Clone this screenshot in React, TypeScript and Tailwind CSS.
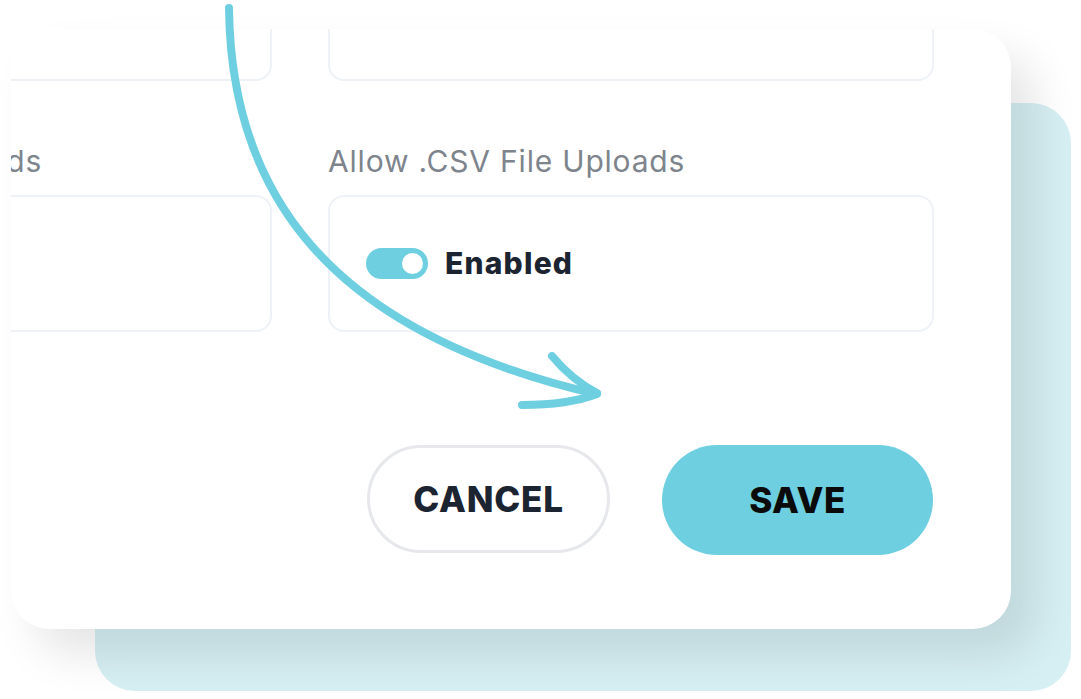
const Field = ({ label, children }: { label?: string; children?: React.ReactNode }) => {
  return (
    <div className="flex flex-col">
      {label && (
        <div className="mt-[62px] mb-[16px] h-[36px] whitespace-nowrap text-[30px] leading-[36px] tracking-[0.8px] text-[#7d848c]">
          {label}
        </div>
      )}
      <div className="h-[137px] rounded-[16px] border-2 border-[#eef2f6] flex items-center px-[36px]">
        {children}
      </div>
    </div>
  );
};

const Toggle = () => (
  <div className="flex items-center w-[62px] h-[31px] rounded-full bg-[#6dcfe0] justify-end pr-[5px]">
    <div className="w-[21px] h-[21px] rounded-full bg-white" />
  </div>
);

export default function App() {
  return (
    <div className="relative w-[1081px] h-[699px] bg-white overflow-hidden font-['Inter',sans-serif]">
      {/* teal panel behind the card */}
      <div className="absolute left-[95px] top-[103px] w-[976px] h-[588px] rounded-[40px] bg-[#d6eff3]" />

      {/* card */}
      <div className="relative ml-[11px] mt-[29px] w-[1000px] h-[600px] rounded-[38px] bg-white overflow-hidden shadow-[24px_26px_44px_rgba(0,0,0,0.1)]">
        <div className="-ml-[324px] -mt-[85px] grid grid-cols-[585px_606px] gap-x-[56px]">
          <Field />
          <Field />
          <Field label="Allow .PDF File Uploads" />
          <Field label="Allow .CSV File Uploads">
            <div className="flex items-center gap-[17px]">
              <Toggle />
              <span className="text-[30px] font-extrabold tracking-[1.2px] text-[#1b2430]">Enabled</span>
            </div>
          </Field>
          <div />
          <div className="flex justify-end gap-[52px] mt-[113px] pr-[1px]">
            <button className="w-[243px] h-[108px] rounded-full border-[3px] border-[#e6e8eb] bg-white text-[35px] font-extrabold text-[#1b2430] tracking-[0.8px]">
              CANCEL
            </button>
            <button className="w-[271px] h-[110px] rounded-full bg-[#6dcfe0] text-[35px] font-extrabold text-[#0b0b0b] tracking-[0.5px]">
              SAVE
            </button>
          </div>
        </div>
      </div>

      {/* hand drawn arrow */}
      <svg className="absolute inset-0 pointer-events-none" width="1081" height="699" viewBox="0 0 1081 699" fill="none">
        <g stroke="#6dcfe0" strokeWidth="8" strokeLinecap="round" strokeLinejoin="round">
          <path d="M229 8 C 231 190, 325 330, 592 393" />
          <path d="M552 356 Q 572 380 597 393" />
          <path d="M522 405 Q 568 405 597 394" />
        </g>
      </svg>
    </div>
  );
}
